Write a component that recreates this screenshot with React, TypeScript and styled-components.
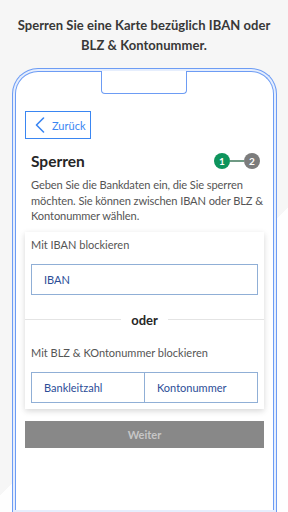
import styled, { createGlobalStyle } from "styled-components";

const GlobalStyle = createGlobalStyle`
  html, body {
    margin: 0;
    padding: 0;
    width: 288px;
    height: 512px;
    overflow: hidden;
  }
  body {
    font-family: "Lato", "Liberation Sans", sans-serif;
    background:
      linear-gradient(135deg, transparent 0 62%, rgba(255, 255, 255, 0.9) 62% 100%),
      #f6f6f6;
  }
`;

export default function App() {
  return (
    <>
      <GlobalStyle />
      <Page>
        <Headline>
          Sperren Sie eine Karte bezüglich IBAN oder
          <br />
          BLZ &amp; Kontonummer.
        </Headline>
        <PhoneOuter>
          <PhoneInner>
            <Notch />
            <BackButton type="button">
              <svg width="10" height="16" viewBox="0 0 10 16" fill="none">
                <path
                  d="M8.5 1 L1.5 8 L8.5 15"
                  stroke="#3a86f2"
                  strokeWidth="1.6"
                  strokeLinecap="round"
                  strokeLinejoin="round"
                />
              </svg>
              Zurück
            </BackButton>

            <TitleRow>
              <Title>Sperren</Title>
              <Steps>
                <StepDot $active>1</StepDot>
                <StepLine />
                <StepDot>2</StepDot>
              </Steps>
            </TitleRow>

            <Intro>
              Geben Sie die Bankdaten ein, die Sie sperren möchten. Sie können
              zwischen IBAN oder BLZ &amp; Kontonummer wählen.
            </Intro>

            <Card>
              <FieldLabel>Mit IBAN blockieren</FieldLabel>
              <InputRow>
                <InputCell>IBAN</InputCell>
              </InputRow>
              <Divider>
                <span>oder</span>
              </Divider>
              <FieldLabel>Mit BLZ &amp; KOntonummer blockieren</FieldLabel>
              <InputRow>
                <InputCell>Bankleitzahl</InputCell>
                <InputCell $split>Kontonummer</InputCell>
              </InputRow>
            </Card>

            <NextButton type="button">Weiter</NextButton>
          </PhoneInner>
        </PhoneOuter>
      </Page>
    </>
  );
}

const Page = styled.div`
  width: 288px;
  height: 512px;
  display: flex;
  flex-direction: column;
  overflow: hidden;
`;

const Headline = styled.h1`
  margin: 15px 0 0;
  height: 53px;
  text-align: center;
  font-size: 13px;
  line-height: 20px;
  font-weight: 700;
  color: #383838;
  letter-spacing: 0.05px;
`;

const PhoneOuter = styled.div`
  margin: 0 11px 0 12px;
  padding: 2px;
  border: 1px solid #6d9cf4;
  border-bottom: none;
  border-radius: 26px 26px 0 0;
  background: #e6eefd;
  flex: 1;
  display: flex;
`;

const PhoneInner = styled.div`
  position: relative;
  flex: 1;
  border: 1px solid #6d9cf4;
  border-bottom: none;
  border-radius: 23px 23px 0 0;
  background: #ffffff;
  padding: 39px 9px 0 9px;
  display: flex;
  flex-direction: column;
`;

const Notch = styled.div`
  position: absolute;
  top: -1px;
  left: 85px;
  width: 84px;
  height: 22px;
  background: #ffffff;
  border: 1px solid #6d9cf4;
  border-top: none;
  border-radius: 0 0 4px 4px;
`;

const BackButton = styled.button`
  align-self: flex-start;
  width: 66px;
  height: 28px;
  display: flex;
  align-items: center;
  gap: 7px;
  padding: 0 0 0 9px;
  border: 1px solid #3a86f2;
  background: #ffffff;
  color: #3a86f2;
  font-family: "Lato", "Liberation Sans", sans-serif;
  font-size: 11px;
  cursor: pointer;
`;

const TitleRow = styled.div`
  margin-top: 12px;
  display: flex;
  align-items: center;
  justify-content: space-between;
  padding: 0 4px 0 6px;
`;

const Title = styled.h2`
  margin: 0;
  font-size: 15.5px;
  line-height: 20px;
  font-weight: 700;
  color: #262626;
`;

const Steps = styled.div`
  display: flex;
  align-items: center;
`;

const StepDot = styled.span<{ $active?: boolean }>`
  width: 16px;
  height: 16px;
  border-radius: 50%;
  display: inline-flex;
  align-items: center;
  justify-content: center;
  background: ${({ $active }) => ($active ? "#0e945c" : "#7c7c7c")};
  color: #ffffff;
  font-size: 10px;
  font-weight: 700;
`;

const StepLine = styled.span`
  width: 14px;
  height: 2px;
  background: #6f9a84;
`;

const Intro = styled.p`
  margin: 6px -4px 0 0;
  padding: 0 0 0 6px;
  font-size: 11.1px;
  line-height: 15.5px;
  letter-spacing: -0.1px;
  color: #555555;
`;

const Card = styled.div`
  margin-top: 8px;
  padding: 5px 6px 6px;
  background: #ffffff;
  box-shadow: 0 2px 6px rgba(0, 0, 0, 0.16);
  display: flex;
  flex-direction: column;
`;

const FieldLabel = styled.div`
  font-size: 11px;
  line-height: 16px;
  color: #555555;
`;

const InputRow = styled.div`
  margin-top: 11px;
  height: 31px;
  display: flex;
  border: 1px solid #90afd6;
  box-sizing: border-box;
`;

const InputCell = styled.div<{ $split?: boolean }>`
  flex: 1;
  display: flex;
  align-items: center;
  padding-left: 12px;
  font-size: 11px;
  color: #2b4d97;
  border-left: ${({ $split }) => ($split ? "1px solid #90afd6" : "none")};
`;

const Divider = styled.div`
  margin: 15px -6px 15px;
  height: 20px;
  display: flex;
  align-items: center;
  gap: 10px;
  font-size: 13px;
  font-weight: 700;
  color: #262626;

  &::before,
  &::after {
    content: "";
    flex: 1;
    height: 1px;
    background: #e4e4e4;
  }
`;

const NextButton = styled.button`
  margin-top: 12px;
  height: 27px;
  border: none;
  background: #888888;
  color: #c6c6c6;
  font-family: "Lato", "Liberation Sans", sans-serif;
  font-size: 11px;
  font-weight: 700;
`;
